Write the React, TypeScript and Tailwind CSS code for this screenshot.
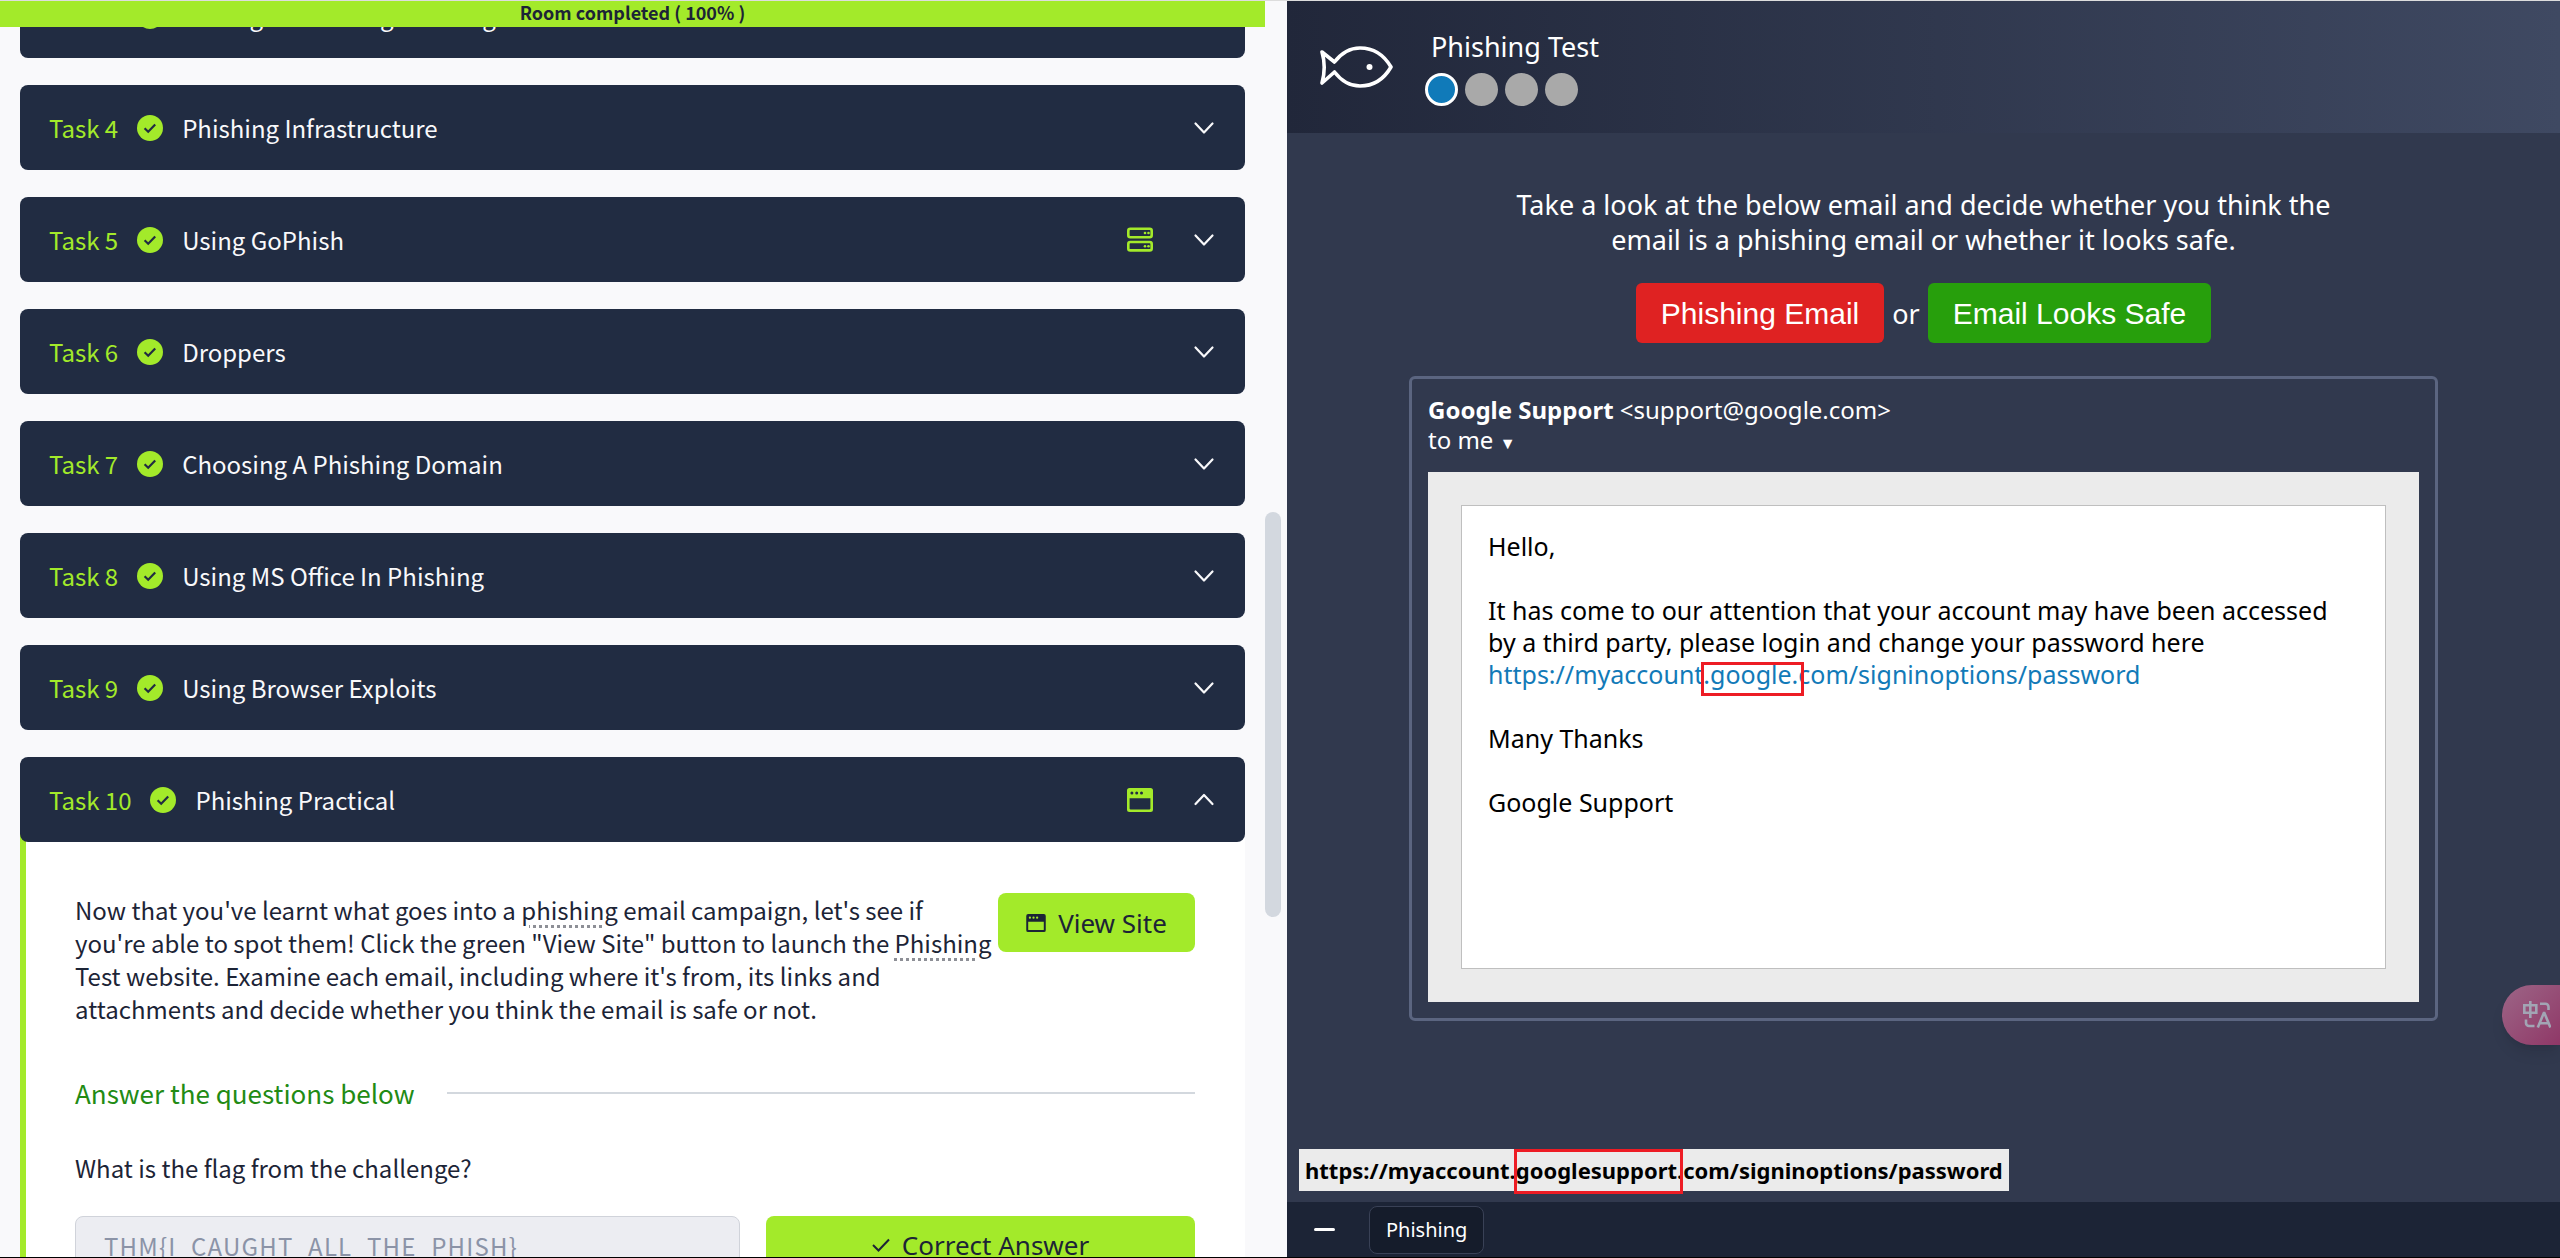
import type { ReactNode } from "react";

type IconKind = "server" | "window";

type Task = {
  id: number;
  title: string;
  icon?: IconKind;
  open?: boolean;
};

const tasks: Task[] = [
  { id: 3, title: "Writing Convincing Phishing Emails" },
  { id: 4, title: "Phishing Infrastructure" },
  { id: 5, title: "Using GoPhish", icon: "server" },
  { id: 6, title: "Droppers" },
  { id: 7, title: "Choosing A Phishing Domain" },
  { id: 8, title: "Using MS Office In Phishing" },
  { id: 9, title: "Using Browser Exploits" },
  { id: 10, title: "Phishing Practical", icon: "window", open: true },
];

function CheckBadge() {
  return (
    <svg viewBox="0 0 26 26" className="size-[26px] shrink-0" aria-label="Completed" role="img">
      <circle cx="13" cy="13" r="13" fill="#a3ea2a" />
      <path d="M7.6 13.2l3.6 3.5 7-7.2" fill="none" stroke="#212c42" strokeWidth="2.2" />
    </svg>
  );
}

function Chevron({ up = false }: { up?: boolean }) {
  return (
    <svg viewBox="0 0 24 24" className="size-6 shrink-0" aria-hidden="true">
      <path
        d={up ? "M3.500 16l8.500-9 8.500 9" : "M3.500 7.500l8.500 9 8.500-9"}
        fill="none"
        stroke="#f9f9fb"
        strokeWidth="2.2"
        strokeLinecap="round"
        strokeLinejoin="round"
      />
    </svg>
  );
}

function ServerIcon() {
  return (
    <svg viewBox="0 0 26 26" className="size-[26px] shrink-0" aria-hidden="true">
      <g fill="none" stroke="#a3ea2a" strokeWidth="2.6">
        <rect x="1.300" y="1.800" width="23.400" height="8.400" rx="2" />
        <rect x="1.300" y="15" width="23.400" height="8.400" rx="2" />
      </g>
      <g fill="#a3ea2a">
        <circle cx="18" cy="6" r="1.300" />
        <circle cx="21.500" cy="6" r="1.300" />
        <circle cx="18" cy="19.200" r="1.300" />
        <circle cx="21.500" cy="19.200" r="1.300" />
      </g>
    </svg>
  );
}

function WindowIcon({ className }: { className: string }) {
  return (
    <svg viewBox="0 0 26 24" className={className} aria-hidden="true">
      <path
        fill="currentColor"
        fillRule="evenodd"
        d="M2.500 0h21A2.500 2.500 0 0 1 26 2.500v19a2.500 2.500 0 0 1-2.500 2.500h-21A2.500 2.500 0 0 1 0 21.500v-19A2.500 2.500 0 0 1 2.500 0zM2.600 10.300v10.300c0 .5.300.8.800.8h19.200c.5 0 .8-.3.800-.8V10.300zM4.900 3.400a1.500 1.500 0 1 0 0 3 1.500 1.500 0 0 0 0-3zm4.800 0a1.500 1.500 0 1 0 0 3 1.500 1.500 0 0 0 0-3zm4.800 0a1.500 1.500 0 1 0 0 3 1.500 1.500 0 0 0 0-3z"
      />
    </svg>
  );
}

function FishLogo() {
  return (
    <svg viewBox="0 0 74 42" className="h-[42px] w-[74px] shrink-0" role="img" aria-label="Fish">
      <path
        d="M15.500 16C22 7.500 31 2 41 2c13 0 24 7 31 19C65 33 55 40 41 40 31 40 22 34.500 15.500 26L3 37c3-11 3-21 0-31z"
        fill="none"
        stroke="#fff"
        strokeWidth="3.600"
        strokeLinejoin="round"
      />
      <circle cx="50.500" cy="21" r="3" fill="#fff" />
    </svg>
  );
}

function TranslateIcon() {
  return (
    <svg viewBox="0 0 28 28" className="size-7" fill="none" stroke="#a2a5b4" strokeWidth="2.600" aria-hidden="true">
      <path d="M1.300 4.200h12v7.500h-12zM7.300 0v17" />
      <path d="M17 2.800h5.500a3 3 0 0 1 3 3V9" />
      <path d="M3 18.500V22a3 3 0 0 0 3 3h5.500" />
      <path d="M14.800 26.500L20.800 12h.6l6 14.500M17 22.300h8.400" />
    </svg>
  );
}

function Term({ children }: { children: ReactNode }) {
  return (
    <span className="underline decoration-[#8d8f96] decoration-dotted decoration-3 underline-offset-[5px]">
      {children}
    </span>
  );
}

function Highlight({ children, box }: { children: ReactNode; box: string }) {
  return (
    <span className="relative">
      {children}
      <span className={`pointer-events-none absolute border-[3px] border-[#ed1c24] ${box}`} />
    </span>
  );
}

function TaskHeader({ task }: { task: Task }) {
  return (
    <button
      type="button"
      aria-expanded={!!task.open}
      className="relative flex h-[85px] w-full items-center rounded-lg bg-[#212c42] px-[29px] text-left"
    >
      <span className="flex items-center gap-[19px]">
        <span className="text-[#a3ea2a]">Task {task.id}</span>
        <CheckBadge />
        <span className="text-[#f9f9fb]">{task.title}</span>
      </span>
      <span className="ml-auto flex items-center gap-[39px] text-[#a3ea2a]">
        {task.icon === "server" && <ServerIcon />}
        {task.icon === "window" && <WindowIcon className="h-6 w-[26px] shrink-0" />}
        <Chevron up={task.open} />
      </span>
    </button>
  );
}

function PracticalBody() {
  return (
    <div className="-mt-2 border-l-[6px] border-[#a3ea2a] bg-white pt-[59px] pr-[50px] pb-12 pl-[49px] text-[#1c2436]">
      <div className="flex items-start justify-between">
        <p className="leading-[33px] whitespace-nowrap">
          Now that you've learnt what goes into a <Term>phishing</Term> email campaign, let's see if
          <br />
          you're able to spot them! Click the green "View Site" button to launch the <Term>Phishing</Term>
          <br />
          Test website. Examine each email, including where it's from, its links and
          <br />
          attachments and decide whether you think the email is safe or not.
        </p>
        <button
          type="button"
          className="flex h-[59px] w-[197px] shrink-0 items-center justify-center gap-3 rounded-lg bg-[#a3ea2a] font-['Noto_Sans',sans-serif] text-[26px]"
        >
          <WindowIcon className="h-[18px] w-5" />
          View Site
        </button>
      </div>
      <div className="mt-[50px] flex items-center gap-8">
        <h2 className="text-[26px] leading-9 text-[#228b14]">Answer the questions below</h2>
        <hr className="flex-1 border-t-2 border-[#d3d8de]" />
      </div>
      <label htmlFor="flag" className="mt-10 block leading-[33px]">
        What is the flag from the challenge?
      </label>
      <div className="mt-8 grid grid-cols-[665fr_429fr] gap-[26px]">
        <input
          id="flag"
          readOnly
          value="THM{I_CAUGHT_ALL_THE_PHISH}"
          className="h-[58px] w-full min-w-0 rounded-lg border border-[#d0d3da] bg-[#ecedf2] px-7 tracking-wider text-[#8b93a7] outline-none"
        />
        <button
          type="button"
          className="flex h-[58px] items-center justify-center gap-3 rounded-lg bg-[#a3ea2a] font-['Noto_Sans',sans-serif] text-[26px]"
        >
          <svg viewBox="0 0 18 14" className="h-[14px] w-[18px]" aria-hidden="true">
            <path d="M1 7l5.500 5.500L17 1.500" fill="none" stroke="#1c2436" strokeWidth="2" />
          </svg>
          Correct Answer
        </button>
      </div>
    </div>
  );
}

function RoomPane() {
  return (
    <section className="flex min-h-0 overflow-hidden bg-[#f9f9fb] font-['Noto_Sans_CJK_SC',sans-serif] text-[24px] leading-[34px]">
      <div className="flex min-w-0 flex-1 flex-col">
        <div className="h-[26px] shrink-0 bg-[#a3ea2a] text-center text-lg leading-[22px] font-bold text-[#1c2436]">
          Room completed ( 100% )
        </div>
        <div className="min-h-0 flex-1 overflow-hidden px-5">
          <ul className="-mt-[54px] flex flex-col gap-[27px]">
            {tasks.map((task) => (
              <li key={task.id}>
                <TaskHeader task={task} />
                {task.open && <PracticalBody />}
              </li>
            ))}
          </ul>
        </div>
      </div>
      <div className="w-[22px] shrink-0 pt-[511px]">
        <div className="h-[405px] w-4 rounded-full bg-[#d3d8df]" />
      </div>
    </section>
  );
}

function EmailPreview() {
  return (
    <article className="mt-[33px] w-full max-w-[1029px] rounded-md border-[3px] border-[#5b6580] p-4 text-[24px] leading-[30px]">
      <p>
        <strong>Google Support</strong> &lt;support@google.com&gt;
      </p>
      <p>
        to me <span className="text-base">▼</span>
      </p>
      <div className="mt-[17px] bg-[#ebebeb] p-[33px]">
        <div className="min-h-[464px] border border-[#bfbfbf] bg-white px-[26px] py-6 text-[25px] leading-8 text-black">
          <p>Hello,</p>
          <p className="mt-8">
            It has come to our attention that your account may have been accessed
            <br />
            by a third party, please login and change your password here
            <br />
            <a href="#password" className="text-[#127ab8]">
              https://myaccount
              <Highlight box="top-[5px] -bottom-[5px] -left-[2px] -right-[6px]">.google.</Highlight>
              com/signinoptions/password
            </a>
          </p>
          <p className="mt-8">Many Thanks</p>
          <p className="mt-8">Google Support</p>
        </div>
      </div>
    </article>
  );
}

function PhishingPane() {
  return (
    <section className="relative flex min-h-0 min-w-0 flex-col overflow-hidden bg-[#31394e] font-['Noto_Sans',sans-serif] text-white">
      <header className="flex h-[132px] shrink-0 items-center gap-8 bg-linear-to-r from-[#21273a] to-[#3f4962] pl-8">
        <FishLogo />
        <div>
          <h1 className="ml-1.5 text-[27px] leading-9">Phishing Test</h1>
          <ol className="mt-2 flex gap-[7px]">
            <li aria-current="step" className="size-[33px] rounded-full border-[3px] border-white bg-[#107ab9]" />
            <li className="size-[33px] rounded-full bg-[#a9a9a9]" />
            <li className="size-[33px] rounded-full bg-[#a9a9a9]" />
            <li className="size-[33px] rounded-full bg-[#a9a9a9]" />
          </ol>
        </div>
      </header>
      <main className="flex flex-1 flex-col items-center pt-[54px] text-[27px] leading-[35px]">
        <p className="text-center">
          Take a look at the below email and decide whether you think the
          <br />
          email is a phishing email or whether it looks safe.
        </p>
        <div className="mt-[26px] flex items-center gap-2">
          <button type="button" className="h-[60px] rounded-md bg-[#df2222] px-[25px] font-['Liberation_Sans',sans-serif] text-[30px]">
            Phishing Email
          </button>
          or
          <button type="button" className="h-[60px] rounded-md bg-[#279f0c] px-[25px] font-['Liberation_Sans',sans-serif] text-[30px]">
            Email Looks Safe
          </button>
        </div>
        <EmailPreview />
        <p className="mt-auto mb-[11px] ml-3 self-start bg-[#ebebeb] px-[6px] text-[22px] leading-[42px] font-bold text-black">
          https://myaccount.
          <Highlight box="-top-[6px] -bottom-[9px] -left-[2px] right-0">googlesupport.</Highlight>
          com/signinoptions/password
        </p>
      </main>
      <footer className="flex h-[55px] shrink-0 items-center bg-[#1c2436] pl-[27px]">
        <button type="button" aria-label="Minimise" className="flex h-12 w-[21px] items-center">
          <span className="h-[3px] w-full rounded-full bg-white" />
        </button>
        <button
          type="button"
          className="ml-[34px] h-12 rounded-lg border border-[#394156] bg-[#151c2b] px-4 text-[20px]"
        >
          Phishing
        </button>
      </footer>
      <button
        type="button"
        aria-label="Translate"
        className="absolute top-[984px] right-0 flex h-[60px] w-[58px] items-center rounded-l-full bg-linear-to-br from-[#9c6587] to-[#8f3767] pl-[21px] shadow-lg"
      >
        <TranslateIcon />
      </button>
    </section>
  );
}

export default function App() {
  return (
    <div className="grid h-screen grid-cols-[1287fr_1273fr] grid-rows-[minmax(0,1fr)] overflow-hidden border-t border-b border-t-[#dddddd] border-b-black bg-[#f9f9fb]">
      <RoomPane />
      <PhishingPane />
    </div>
  );
}
